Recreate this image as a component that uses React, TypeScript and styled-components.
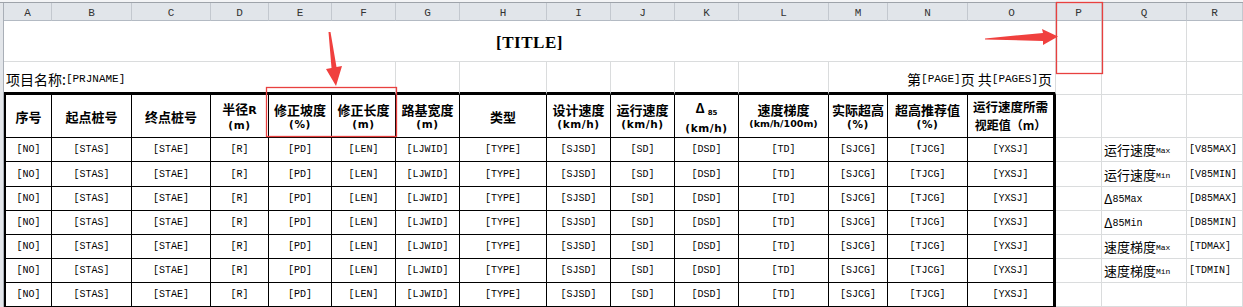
import React from "react";
import styled, { createGlobalStyle } from "styled-components";

const CJK = `"Noto Sans CJK SC", "Noto Sans", sans-serif`;
const MONO = `"Liberation Mono", "DejaVu Sans Mono", monospace`;
const UNIT = `"DejaVu Sans", "Noto Sans", sans-serif`;

const LETTERS = "ABCDEFGHIJKLMNOPQR".split("");
// widths of the sheet columns A..Q, R takes the rest
const COL_WIDTHS =
  "48px 80px 79px 58px 63px 64px 64px 87px 64px 64px 64px 90px 59px 80px 88px 46px 85px 1fr";
const ROW_HEIGHTS = "18px 41px 33px 43px 24px 25px 24px 24px 24px 24px 24px";

type HeaderDef = {
  key: string;
  title: React.ReactNode;
  unit?: React.ReactNode;
  small?: boolean;
  spaced?: boolean;
  cjkUnit?: boolean;
};

const Latin = styled.span`
  font-family: ${UNIT};
  font-weight: 700;
  font-size: 11px;
`;

const Sub = styled.span`
  font-family: ${UNIT};
  font-size: 7px;
  font-weight: 700;
  margin-left: 3px;
  position: relative;
  top: 2px;
`;

const HEADERS: HeaderDef[] = [
  { key: "no", title: "序号" },
  { key: "stas", title: "起点桩号" },
  { key: "stae", title: "终点桩号" },
  { key: "r", title: <>半径<Latin>R</Latin></>, unit: "(m)" },
  { key: "pd", title: "修正坡度", unit: "(%)" },
  { key: "len", title: "修正长度", unit: "(m)" },
  { key: "ljwid", title: "路基宽度", unit: "(m)" },
  { key: "type", title: "类型" },
  { key: "sjsd", title: "设计速度", unit: "(km/h)" },
  { key: "sd", title: "运行速度", unit: "(km/h)" },
  { key: "dsd", title: <>Δ<Sub>85</Sub></>, unit: "(km/h)", spaced: true },
  { key: "td", title: "速度梯度", unit: "(km/h/100m)", small: true },
  { key: "sjcg", title: "实际超高", unit: "(%)" },
  { key: "tjcg", title: "超高推荐值", unit: "(%)" },
  { key: "yxsj", title: "运行速度所需", unit: "视距值（m）", cjkUnit: true },
];

const FIELDS = [
  "NO", "STAS", "STAE", "R", "PD", "LEN", "LJWID", "TYPE",
  "SJSD", "SD", "DSD", "TD", "SJCG", "TJCG", "YXSJ",
];

// summary labels to the right of the table, one per data row
const SIDE = [
  { cjk: "运行速度", tail: "Max", value: "V85MAX" },
  { cjk: "运行速度", tail: "Min", value: "V85MIN" },
  { cjk: "Δ", tail: "85Max", value: "D85MAX", wide: true },
  { cjk: "Δ", tail: "85Min", value: "D85MIN", wide: true },
  { cjk: "速度梯度", tail: "Max", value: "TDMAX" },
  { cjk: "速度梯度", tail: "Min", value: "TDMIN" },
  null,
];

const ROW_COUNT = 7;

export default function App() {
  return (
    <>
      <GlobalStyle />
      <Sheet>
        <TopStrip />
        <Body>
          <RowHeaderStrip />
          <Grid>
            {/* column letters */}
            {LETTERS.map((letter) => (
              <ColHead key={letter}>{letter}</ColHead>
            ))}

            {/* title row */}
            <TitleCell $span={15}>[TITLE]</TitleCell>
            <Cell />
            <Cell />
            <Cell />

            {/* project name + page counter */}
            <ProjectCell $span={6} $thick>
              项目名称:<Mono>[PRJNAME]</Mono>
            </ProjectCell>
            {[0, 1, 2, 3, 4, 5].map((i) => (
              <Cell key={i} $thick />
            ))}
            <PageCell $span={3} $thick>
              第<Mono>[PAGE]</Mono>页 共<Mono>[PAGES]</Mono>页
            </PageCell>
            <Cell />
            <Cell />
            <Cell />

            {/* table header */}
            {HEADERS.map((h, i) => (
              <HeadCell key={h.key} $first={i === 0} $last={i === HEADERS.length - 1}>
                <HeadLine $spaced={h.spaced} $loose={h.cjkUnit}>
                  {h.title}
                </HeadLine>
                {h.unit && (
                  <UnitLine $small={h.small} $cjk={h.cjkUnit}>
                    {h.unit}
                  </UnitLine>
                )}
              </HeadCell>
            ))}
            <Cell />
            <Cell />
            <Cell />

            {/* data rows */}
            {Array.from({ length: ROW_COUNT }).map((_, row) => {
              const side = SIDE[row];
              return (
                <React.Fragment key={row}>
                  {FIELDS.map((f, i) => (
                    <DataCell key={f} $first={i === 0} $last={i === FIELDS.length - 1}>
                      [{f}]
                    </DataCell>
                  ))}
                  <Cell />
                  <SideCell>
                    {side && (
                      <>
                        {side.cjk}
                        <SmallMono $wide={side.wide}>{side.tail}</SmallMono>
                      </>
                    )}
                  </SideCell>
                  <SideCell>{side && <ValueMono>[{side.value}]</ValueMono>}</SideCell>
                </React.Fragment>
              );
            })}
          </Grid>
        </Body>

        {/* red review marks drawn on top of the sheet */}
        <Marks width={1243} height={307} viewBox="0 0 1243 307">
          <rect x={266.5} y={87.5} width={130} height={49} fill="none" stroke="#e8403f" strokeWidth={1.3} />
          <rect x={1056.5} y={2.5} width={46} height={71} fill="none" stroke="#e8403f" strokeWidth={1.3} />
          <polygon
            points="328.5,32 330.5,32 336.5,67 342,66 336,86 326,69 331.5,68"
            fill="#f0403e"
          />
          <polygon
            points="985,38.5 1043,33 1042,29 1058,36.5 1043,45 1043,41 985,39.5"
            fill="#f0403e"
          />
        </Marks>
      </Sheet>
    </>
  );
}

const GlobalStyle = createGlobalStyle`
  html, body {
    margin: 0;
    padding: 0;
    background: #fff;
  }
  body {
    width: 1243px;
    height: 307px;
    overflow: hidden;
  }
`;

const Sheet = styled.div`
  position: relative;
  width: 1243px;
  height: 307px;
  overflow: hidden;
  background: #fff;
`;

const TopStrip = styled.div`
  height: 3px;
  box-sizing: border-box;
  background: #f3f4f6;
  border-bottom: 1px solid #9ea3aa;
`;

const Body = styled.div`
  display: flex;
`;

const RowHeaderStrip = styled.div`
  width: 4px;
  flex: none;
  height: 304px;
  box-sizing: border-box;
  background: #e3e6ea;
  border-right: 1px solid #a9afb7;
`;

const Grid = styled.div`
  flex: 1;
  display: grid;
  grid-template-columns: ${COL_WIDTHS};
  grid-template-rows: ${ROW_HEIGHTS};
`;

const ColHead = styled.div`
  box-sizing: border-box;
  display: flex;
  justify-content: center;
  align-items: center;
  padding-top: 3px;
  background: #e1e5ea;
  border-right: 1px solid #c3c8cf;
  border-bottom: 1px solid #b3bac3;
  font: 11px ${MONO};
  color: #333;
`;

const Cell = styled.div<{ $span?: number; $thick?: boolean }>`
  box-sizing: border-box;
  min-width: 0;
  grid-column: span ${(p) => p.$span ?? 1};
  display: flex;
  align-items: center;
  border-right: 1px solid #dadcdd;
  border-bottom: ${(p) => (p.$thick ? "3px solid #000" : "1px solid #dadcdd")};
  white-space: nowrap;
`;

const TitleCell = styled(Cell)`
  justify-content: center;
  padding-top: 3px;
  font: 700 17px "Liberation Serif", "DejaVu Serif", serif;
  letter-spacing: 0.5px;
  color: #000;
`;

const ProjectCell = styled(Cell)`
  align-items: flex-end;
  padding: 0 0 5px 2px;
  font: 14px/16px ${CJK};
  color: #000;
`;

const PageCell = styled(Cell)`
  align-items: flex-end;
  justify-content: flex-end;
  padding: 0 3px 5px 0;
  font: 14px/16px ${CJK};
  color: #000;
`;

const Mono = styled.span`
  font-family: ${MONO};
  font-size: 11px;
`;

const ValueMono = styled.span`
  font-family: ${MONO};
  font-size: 10px;
`;

const SmallMono = styled.span<{ $wide?: boolean }>`
  font-family: ${MONO};
  font-size: ${(p) => (p.$wide ? "10px" : "8px")};
  margin-top: 2px;
`;

const SideCell = styled(Cell)`
  padding-left: 2px;
  font: 13px ${CJK};
  color: #000;
`;

const TCell = styled.div<{ $first?: boolean; $last?: boolean }>`
  box-sizing: border-box;
  min-width: 0;
  display: flex;
  flex-direction: column;
  align-items: center;
  justify-content: center;
  text-align: center;
  white-space: nowrap;
  border-left: ${(p) => (p.$first ? "2px solid #000" : "none")};
  border-right: ${(p) => (p.$last ? "3px" : "1px")} solid #000;
  border-bottom: 1px solid #000;
  color: #000;
`;

const HeadCell = styled(TCell)`
  font-family: ${CJK};
  font-weight: 700;
  font-size: 13px;
`;

const HeadLine = styled.div<{ $spaced?: boolean; $loose?: boolean }>`
  font-size: ${(p) => (p.$loose ? "12.5px" : "13px")};
  line-height: ${(p) => (p.$loose ? "18px" : p.$spaced ? "19px" : "15px")};
`;

const UnitLine = styled.div<{ $small?: boolean; $cjk?: boolean }>`
  line-height: ${(p) => (p.$cjk ? "18px" : "14px")};
  font-family: ${(p) => (p.$cjk ? CJK : UNIT)};
  font-size: ${(p) => (p.$cjk ? "12px" : p.$small ? "9.5px" : "10.5px")};
  letter-spacing: ${(p) => (p.$cjk || p.$small ? "0" : "0.6px")};
`;

const DataCell = styled(TCell)`
  font: 10px ${MONO};
`;

const Marks = styled.svg`
  position: absolute;
  left: 0;
  top: 0;
  pointer-events: none;
`;
